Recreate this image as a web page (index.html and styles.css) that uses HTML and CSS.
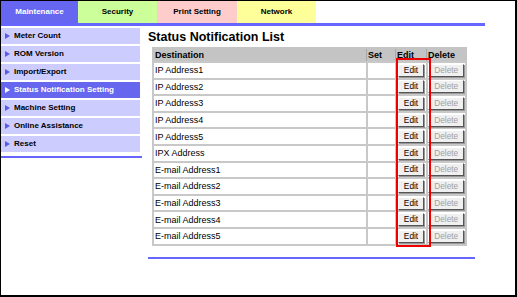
FILE: index.html
```html
<!DOCTYPE html>
<html lang="en">
<head>
    <meta charset="UTF-8">
    <title>Status Notification List</title>
    <link rel="stylesheet" href="styles.css">
</head>
<body>
    <div class="frame">
        <div class="tabs">
            <div class="tab maint">Maintenance</div>
            <div class="tab sec">Security</div>
            <div class="tab print">Print Setting</div>
            <div class="tab net">Network</div>
        </div>
        <div class="tabline"></div>

        <div class="main">
            <div class="side">
                <ul class="menu">
                    <li>Meter Count</li>
                    <li>ROM Version</li>
                    <li>Import/Export</li>
                    <li class="on">Status Notification Setting</li>
                    <li>Machine Setting</li>
                    <li>Online Assistance</li>
                    <li>Reset</li>
                </ul>
                <div class="sideline"></div>
            </div>

            <div class="content">
                <h1 class="title">Status Notification List</h1>
                <table class="list">
                    <tr>
                        <th class="dest">Destination</th>
                        <th class="set">Set</th>
                        <th class="edit">Edit</th>
                        <th class="del">Delete</th>
                    </tr>
                    <tr><td>IP Address1</td><td></td><td class="c"><button class="btn e">Edit</button></td><td class="c"><button class="btn d" disabled>Delete</button></td></tr>
                    <tr><td>IP Address2</td><td></td><td class="c"><button class="btn e">Edit</button></td><td class="c"><button class="btn d" disabled>Delete</button></td></tr>
                    <tr><td>IP Address3</td><td></td><td class="c"><button class="btn e">Edit</button></td><td class="c"><button class="btn d" disabled>Delete</button></td></tr>
                    <tr><td>IP Address4</td><td></td><td class="c"><button class="btn e">Edit</button></td><td class="c"><button class="btn d" disabled>Delete</button></td></tr>
                    <tr><td>IP Address5</td><td></td><td class="c"><button class="btn e">Edit</button></td><td class="c"><button class="btn d" disabled>Delete</button></td></tr>
                    <tr><td>IPX Address</td><td></td><td class="c"><button class="btn e">Edit</button></td><td class="c"><button class="btn d" disabled>Delete</button></td></tr>
                    <tr><td>E-mail Address1</td><td></td><td class="c"><button class="btn e">Edit</button></td><td class="c"><button class="btn d" disabled>Delete</button></td></tr>
                    <tr><td>E-mail Address2</td><td></td><td class="c"><button class="btn e">Edit</button></td><td class="c"><button class="btn d" disabled>Delete</button></td></tr>
                    <tr><td>E-mail Address3</td><td></td><td class="c"><button class="btn e">Edit</button></td><td class="c"><button class="btn d" disabled>Delete</button></td></tr>
                    <tr><td>E-mail Address4</td><td></td><td class="c"><button class="btn e">Edit</button></td><td class="c"><button class="btn d" disabled>Delete</button></td></tr>
                    <tr><td>E-mail Address5</td><td></td><td class="c"><button class="btn e">Edit</button></td><td class="c"><button class="btn d" disabled>Delete</button></td></tr>
                </table>
                <div class="redbox"></div>
                <div class="bottomline"></div>
            </div>
        </div>
    </div>
</body>
</html>
```

FILE: styles.css
```css
body{
    margin: 0;
    font-family: "Liberation Sans", Arial, sans-serif;
    background: white;
}

.frame{
    width: 517px;
    height: 297px;
    box-sizing: border-box;
    border-left: 1px solid black;
    border-top: 1px solid black;
    border-right: 2px solid black;
    border-bottom: 2px solid black;
    overflow: hidden;
}

/* tabs */
.tabs{
    display: flex;
    height: 22px;
}
.tab{
    font-size: 8px;
    font-weight: bold;
    line-height: 22px;
    text-align: center;
    color: black;
}
.tab.maint{ width: 77px; background: #6666f0; color: white; }
.tab.sec{ width: 79px; background: #ccff99; }
.tab.print{ width: 80px; background: #ffcccc; }
.tab.net{ width: 79px; background: #ffff99; }

.tabline{
    width: 484px;
    height: 3px;
    background: #6666ff;
}

.main{
    display: flex;
}

/* left menu */
.side{
    width: 139px;
    padding-top: 2px;
}
.menu{
    list-style: none;
    margin: 0;
    padding: 0;
    display: flex;
    flex-direction: column;
    gap: 2px;
}
.menu li{
    height: 16px;
    line-height: 16px;
    background: #ccccff;
    font-size: 8px;
    font-weight: bold;
    color: black;
    padding-left: 13px;
    position: relative;
    white-space: nowrap;
}
.menu li::before{
    content: "";
    position: absolute;
    left: 4px;
    top: 5px;
    border-left: 5px solid #5a5ae6;
    border-top: 3px solid transparent;
    border-bottom: 3px solid transparent;
}
.menu li.on{
    background: #6666ee;
    color: white;
}
.menu li.on::before{
    border-left-color: white;
}
.sideline{
    margin-top: 4px;
    width: 141px;
    height: 2px;
    background: #6666ff;
}

/* content */
.content{
    position: relative;
    padding-left: 8px;
}
.title{
    margin: 4px 0 3px 0;
    font-size: 12.5px;
    line-height: 14px;
    font-weight: bold;
}
.list{
    margin-left: 4px;
    width: 315px;
    border-collapse: collapse;
    border: 2px solid #c4c4c4;
    font-size: 9px;
}
.list th{
    background: #c4c4c4;
    text-align: left;
    font-weight: bold;
    height: 12px;
    line-height: 12px;
    padding: 0 1px;
    border: 1px solid #a8a8a8;
}
.list td{
    height: 14.6px;
    padding: 0 1px;
    border: 2px solid #c8c8c8;
    white-space: nowrap;
}
.list th.dest{ width: 210px; }
.list th.set{ width: 26px; }
.list th.edit{ width: 28px; }
.list td.c{ text-align: center; padding: 0; }

.btn{
    font-family: "Liberation Sans", Arial, sans-serif;
    font-size: 8.3px;
    height: 13px;
    line-height: 9px;
    padding: 0;
    background: #f0f0f0;
    border: 1px solid;
    border-color: #ffffff #555555 #555555 #ffffff;
    box-shadow: 1px 1px 0 #999;
    color: black;
    vertical-align: middle;
}
.btn.e{ width: 26px; }
.btn.d{ width: 36px; color: #a0a0a0; }

.redbox{
    position: absolute;
    left: 256px;
    top: 32px;
    width: 35px;
    height: 189px;
    box-sizing: border-box;
    border: 2px solid #ee0000;
}
.bottomline{
    margin-top: 11px;
    width: 327px;
    height: 2px;
    background: #6666ff;
}
```
